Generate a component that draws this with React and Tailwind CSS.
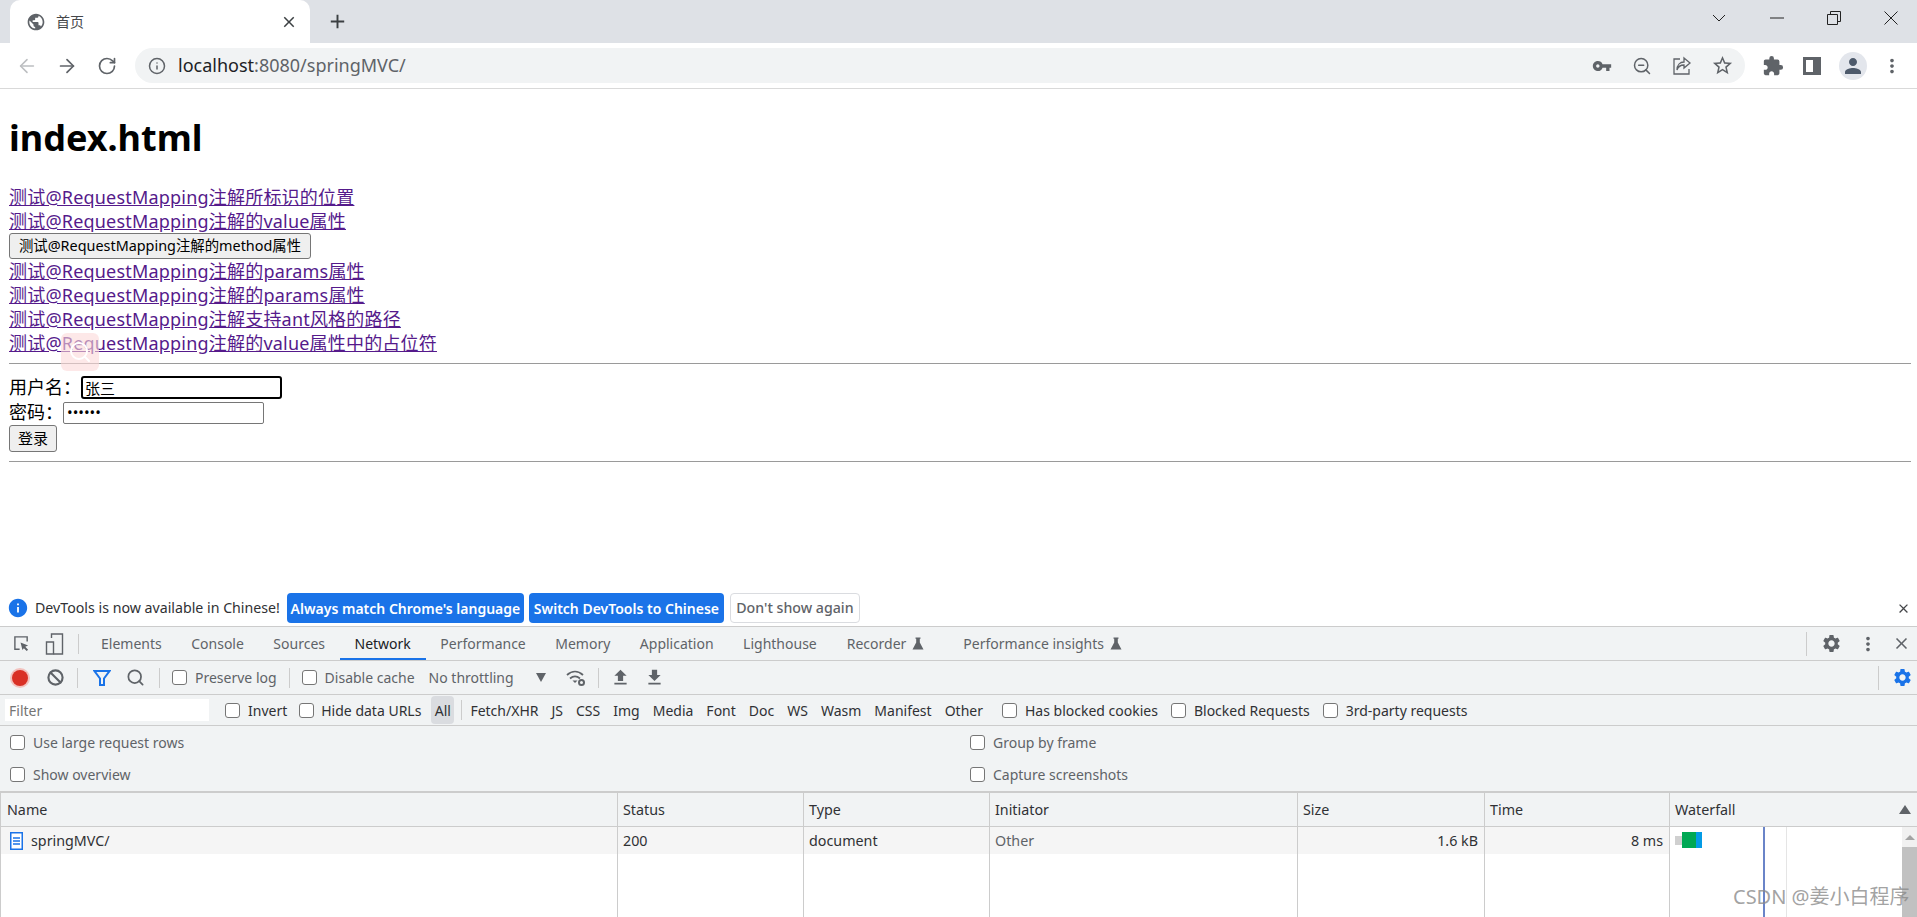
import React from 'react';
import {ArrowLeft, ArrowRight, RotateCw, Info, ZoomOut, Ban, Search} from 'lucide-react';
import {MdPublic, MdClose, MdAdd, MdVpnKey, MdStarBorder, MdExtension, MdPerson, MdMoreVert, MdSettings, MdFileUpload, MdFileDownload, MdInfo} from 'react-icons/md';

const links = [
    '测试@RequestMapping注解所标识的位置',
    '测试@RequestMapping注解的value属性',
    null,
    '测试@RequestMapping注解的params属性',
    '测试@RequestMapping注解的params属性',
    '测试@RequestMapping注解支持ant风格的路径',
    '测试@RequestMapping注解的value属性中的占位符',
];

const tabs = ['Elements', 'Console', 'Sources', 'Network', 'Performance', 'Memory', 'Application', 'Lighthouse'];
const types = ['Fetch/XHR', 'JS', 'CSS', 'Img', 'Media', 'Font', 'Doc', 'WS', 'Wasm', 'Manifest', 'Other'];

const Flask = ({className}) => (
    <svg viewBox="0 0 12 12" className={className} fill="currentColor">
        <path d="M3.500 0h5v1.200H7.800V5L11.500 12H.5L4.200 5V1.200h-.7z" />
    </svg>
);

const Box = ({className = ''}) => (
    <span className={`inline-block w-[15px] h-[15px] shrink-0 bg-white border border-[#767676] rounded-[3px] ${className}`} />
);

const Sep = ({className = ''}) => <span className={`w-px h-[20px] bg-[#ccc] shrink-0 ${className}`} />;

const App = () => {
    return (
        <div className="w-[1917px] h-[917px] overflow-hidden flex flex-col bg-white font-['Noto_Sans','Noto_Sans_CJK_SC',sans-serif] text-[#202124]">
            {/* tab strip */}
            <div className="h-[43px] bg-[#dee1e6] flex items-end shrink-0">
                <div className="ml-[10px] w-[300px] h-[43px] bg-white rounded-t-[10px] flex items-center pl-[16px] pr-[12px]">
                    <MdPublic className="w-[20px] h-[20px] text-[#5f6368]" />
                    <span className="ml-[10px] text-[14px] text-[#45474a] flex-1">首页</span>
                    <MdClose className="w-[18px] h-[18px] text-[#3c4043]" />
                </div>
                <div className="h-[43px] flex items-center ml-[16px]">
                    <MdAdd className="w-[23px] h-[23px] text-[#3c4043]" />
                </div>
                <div className="flex-1" />
                <div className="h-[36px] self-start flex items-center text-[#222]">
                    <svg viewBox="0 0 14 8" className="w-[14px] h-[8px]" fill="none" stroke="currentColor"><path d="M1 1l6 6 6-6" /></svg>
                    <svg viewBox="0 0 14 2" className="w-[14px] h-[2px] ml-[44px]" fill="none" stroke="currentColor"><path d="M0 1h14" /></svg>
                    <svg viewBox="0 0 14 14" className="w-[14px] h-[14px] ml-[43px]" fill="none" stroke="currentColor"><path d="M.5 3.500h10v10H.5zM3.500 3.500V.5h10v10h-3" /></svg>
                    <svg viewBox="0 0 14 14" className="w-[14px] h-[14px] ml-[43px] mr-[19px]" fill="none" stroke="currentColor"><path d="M.5.5l13 13M13.500.5l-13 13" /></svg>
                </div>
            </div>
            {/* toolbar */}
            <div className="h-[46px] shrink-0 bg-white border-b border-[#d9d9d9] flex items-center">
                <ArrowLeft className="ml-[16px] w-[22px] h-[22px] text-[#bcbec1]" strokeWidth={1.7} />
                <ArrowRight className="ml-[18px] w-[22px] h-[22px] text-[#5f6368]" strokeWidth={1.9} />
                <RotateCw className="ml-[19px] w-[20px] h-[20px] text-[#5f6368]" strokeWidth={2} />
                <div className="ml-[18px] w-[1610px] h-[35px] bg-[#f1f3f4] rounded-full flex items-center">
                    <Info className="ml-[13px] w-[18px] h-[18px] text-[#5f6368]" strokeWidth={2} />
                    <span className="ml-[12px] text-[18px] tracking-[0px] text-[#202124]">localhost<span className="text-[#5f6368]">:8080/springMVC/</span></span>
                    <div className="flex-1" />
                    <MdVpnKey className="w-[20px] h-[20px] text-[#5f6368]" />
                    <ZoomOut className="ml-[20px] w-[20px] h-[20px] text-[#5f6368]" strokeWidth={1.8} />
                    <svg viewBox="0 0 20 20" className="ml-[20px] w-[20px] h-[20px] text-[#5f6368]" fill="none" stroke="currentColor" strokeWidth="1.300">
                        <path d="M8 3H2v15h15v-5M12 2l6 5-6 5V9c-4 0-6 2-7 5 0-5 3-8 7-8z" />
                    </svg>
                    <MdStarBorder className="ml-[19px] w-[23px] h-[23px] text-[#5f6368]" />
                    <div className="w-[11px]" />
                </div>
                <MdExtension className="ml-[17px] w-[22px] h-[22px] text-[#5f6368]" />
                <svg viewBox="0 0 18 18" className="ml-[19px] w-[18px] h-[18px] text-[#5f6368]" fill="currentColor"><path d="M0 0h18v18H0zM3 3v12h7V3z" fillRule="evenodd" /></svg>
                <div className="ml-[18px] w-[28px] h-[28px] rounded-full bg-[#e3e6ec] flex items-center justify-center">
                    <MdPerson className="w-[24px] h-[24px] text-[#4d5a6b]" />
                </div>
                <MdMoreVert className="ml-[14px] w-[22px] h-[22px] text-[#5f6368]" />
            </div>
            {/* page */}
            <div className="h-[503px] shrink-0 pl-[9px] pr-[6px] relative text-[18px] text-black">
                <h1 className="m-0 text-[36px] font-bold leading-[50px] mt-[24px] mb-[22px]">index.html</h1>
                <div className="flex flex-col items-start">
                    {links.map((text, index) =>
                        text ? (
                            <a key={index} href="#" className="h-[24px] leading-[24px] tracking-[0.2px] text-[#551a8b] underline">{text}</a>
                        ) : (
                            <button key={index} className="h-[26px] w-[302px] bg-[#efefef] border border-[#767676] rounded-[3px] text-[14.4px] leading-none text-black whitespace-nowrap">测试@RequestMapping注解的method属性</button>
                        )
                    )}
                </div>
                <hr className="mt-[8px] border-0 h-px bg-[#9a9a9a]" />
                <div className="flex items-center h-[25px] mt-[11px]">
                    <span>用户名：</span>
                    <input readOnly value="张三" className="absolute left-[81px] w-[201px] h-[23px] bg-white border-2 border-black rounded-[3px] px-[2px] text-[15px] outline-none" />
                </div>
                <div className="flex items-center h-[25px]">
                    <span>密码：</span>
                    <input readOnly type="password" value="123456" className="absolute left-[63px] w-[201px] h-[22px] bg-white border border-[#767676] rounded-[2px] px-[3px] text-[15px] outline-none" />
                </div>
                <button className="block h-[27px] w-[48px] bg-[#efefef] border border-[#767676] rounded-[3px] text-[15px] leading-none">登录</button>
                <hr className="mt-[9px] border-0 h-px bg-[#9a9a9a]" />
                {/* floating translucent search badge */}
                <div className="absolute left-[61px] top-[244px] w-[38px] h-[38px] rounded-[6px] bg-[#fbd9d9]/60 flex items-center justify-center">
                    <Search className="w-[24px] h-[24px] text-white" />
                </div>
            </div>
            {/* devtools infobar */}
            <div className="h-[35px] shrink-0 bg-white border-b border-[#ccc] flex items-center pb-[2px] text-[14.2px] text-[#303134]">
                <MdInfo className="ml-[7px] w-[22px] h-[22px] text-[#1a73e8]" />
                <span className="ml-[6px]">DevTools is now available in Chinese!</span>
                <div className="ml-[7px] w-[237px] h-[30px] rounded-[4px] bg-[#1a73e8] text-white text-[14px] font-semibold flex items-center justify-center whitespace-nowrap">Always match Chrome's language</div>
                <div className="ml-[5px] w-[195px] h-[30px] rounded-[4px] bg-[#1a73e8] text-white text-[14px] font-semibold flex items-center justify-center whitespace-nowrap">Switch DevTools to Chinese</div>
                <div className="ml-[6px] w-[130px] h-[30px] rounded-[4px] border border-[#dadce0] bg-white text-[#5f6368] font-medium flex items-center justify-center whitespace-nowrap">Don't show again</div>
                <div className="flex-1" />
                <MdClose className="w-[15px] h-[15px] mr-[6px] text-[#45474a]" />
            </div>
            {/* devtools tabs */}
            <div className="h-[34px] shrink-0 bg-[#f1f3f4] border-b border-[#ccc] flex items-center text-[14px] text-[#5f6368]">
                <svg viewBox="0 0 18 18" className="ml-[13px] w-[17px] h-[17px]" fill="none" stroke="currentColor" strokeWidth="1.500">
                    <path d="M7 15H2V2h13v5" />
                    <path d="M8 8l8 3-3 1.500 3 3-1.500 1.500-3-3L10 16z" fill="currentColor" stroke="none" />
                </svg>
                <svg viewBox="0 0 18 22" className="ml-[15px] w-[19px] h-[22px]" fill="none" stroke="currentColor" strokeWidth="1.400">
                    <path d="M6 5V1h11v20H8" />
                    <path d="M1 9h7v12H1z" />
                </svg>
                <Sep className="ml-[14px]" />
                <div className="ml-[22px] flex items-center gap-[29.5px] h-full">
                    {tabs.map((tab) => (
                        <div key={tab} className={`relative h-full flex items-center ${tab === 'Network' ? 'text-[#202124]' : ''}`}>
                            {tab}
                            {tab === 'Network' && <span className="absolute -left-[15px] -right-[15px] bottom-0 h-[2px] bg-[#1a73e8]" />}
                        </div>
                    ))}
                </div>
                <span className="ml-[30px]">Recorder</span>
                <Flask className="ml-[6px] w-[12px] h-[13px]" />
                <span className="ml-[39px]">Performance insights</span>
                <Flask className="ml-[6px] w-[12px] h-[13px]" />
                <div className="flex-1" />
                <Sep className="h-[24px]" />
                <MdSettings className="ml-[14px] w-[21px] h-[21px]" />
                <MdMoreVert className="ml-[15px] w-[22px] h-[22px]" />
                <MdClose className="ml-[13px] w-[19px] h-[19px] mr-[6px]" />
            </div>
            {/* network toolbar */}
            <div className="h-[34px] shrink-0 bg-[#f1f3f4] border-b border-[#ccc] flex items-center text-[14px] text-[#5f6368]">
                <span className="ml-[12px] w-[16px] h-[16px] rounded-full bg-[#d93025] shadow-[0_0_0_2px_#f3c2be]" />
                <Ban className="ml-[19px] w-[17px] h-[17px] text-[#5f6368]" strokeWidth={3} />
                <Sep className="ml-[13px]" />
                <svg viewBox="0 0 18 18" className="ml-[15px] w-[18px] h-[18px] text-[#1a73e8]" fill="none" stroke="currentColor" strokeWidth="2"><path d="M1.500 2h15L11 9.500V16H7V9.500z" /></svg>
                <Search className="ml-[15px] w-[19px] h-[19px] text-[#5f6368]" strokeWidth={2.2} />
                <Sep className="ml-[14px]" />
                <Box className="ml-[12px]" />
                <span className="ml-[8px]">Preserve log</span>
                <Sep className="ml-[12px]" />
                <Box className="ml-[12px]" />
                <span className="ml-[8px]">Disable cache</span>
                <span className="ml-[14px]">No throttling</span>
                <span className="ml-[22px] w-0 h-0 border-x-[5px] border-x-transparent border-t-[9px] border-t-[#5f6368]" />
                <svg viewBox="0 0 20 18" className="ml-[20px] w-[20px] h-[18px]" fill="none" stroke="currentColor" strokeWidth="1.800">
                    <path d="M1 6c5-4.500 11-4.500 16 0M4 9.500c3-2.500 7-2.500 10 0" />
                    <path d="M9 14l-2.500-2.500h5z" fill="currentColor" stroke="none" />
                    <circle cx="15.500" cy="13.500" r="2.500" strokeWidth="2" />
                </svg>
                <Sep className="ml-[12px]" />
                <MdFileUpload className="ml-[11px] w-[21px] h-[21px]" />
                <MdFileDownload className="ml-[13px] w-[21px] h-[21px]" />
                <div className="flex-1" />
                <Sep className="h-[24px]" />
                <MdSettings className="ml-[13px] w-[21px] h-[21px] mr-[4px] text-[#1a73e8]" />
            </div>
            {/* filter row */}
            <div className="h-[31px] shrink-0 bg-[#f1f3f4] border-b border-[#ccc] flex items-center text-[14px] text-[#303134]">
                <div className="ml-[5px] w-[204px] h-[22px] bg-white flex items-center pl-[4px] text-[#757575]">Filter</div>
                <Box className="ml-[16px]" />
                <span className="ml-[8px]">Invert</span>
                <Box className="ml-[12px]" />
                <span className="ml-[7px]">Hide data URLs</span>
                <div className="ml-[10px] w-[23px] h-[28px] rounded-[4px] bg-[#dadce0] flex items-center justify-center">All</div>
                <Sep className="ml-[7px]" />
                <div className="ml-[8px] flex items-center gap-[13px]">
                    {types.map((type) => <span key={type}>{type}</span>)}
                </div>
                <Box className="ml-[19px]" />
                <span className="ml-[8px]">Has blocked cookies</span>
                <Box className="ml-[13px]" />
                <span className="ml-[8px]">Blocked Requests</span>
                <Box className="ml-[13px]" />
                <span className="ml-[8px]">3rd-party requests</span>
            </div>
            {/* settings pane */}
            <div className="h-[65px] shrink-0 bg-[#f1f3f4] grid grid-cols-[970px_1fr] grid-rows-2 text-[14px] text-[#5f6368]">
                <div className="flex items-center pl-[10px]"><Box /><span className="ml-[8px]">Use large request rows</span></div>
                <div className="flex items-center"><Box /><span className="ml-[8px]">Group by frame</span></div>
                <div className="flex items-center pl-[10px]"><Box /><span className="ml-[8px]">Show overview</span></div>
                <div className="flex items-center"><Box /><span className="ml-[8px]">Capture screenshots</span></div>
            </div>
            {/* request table */}
            <div className="flex-1 min-h-0 border-t-2 border-[#ccc] border-l border-l-[#ccc] flex flex-col text-[14.3px] text-[#303134] relative">
                <div className="h-[34px] shrink-0 bg-[#f1f3f4] border-b border-[#ccc] flex">
                    <div className="w-[617px] border-r border-[#ccc] pl-[6px] flex items-center">Name</div>
                    <div className="w-[186px] border-r border-[#ccc] pl-[5px] flex items-center">Status</div>
                    <div className="w-[186px] border-r border-[#ccc] pl-[5px] flex items-center">Type</div>
                    <div className="w-[308px] border-r border-[#ccc] pl-[5px] flex items-center">Initiator</div>
                    <div className="w-[187px] border-r border-[#ccc] pl-[5px] flex items-center">Size</div>
                    <div className="w-[185px] border-r border-[#ccc] pl-[5px] flex items-center">Time</div>
                    <div className="flex-1 pl-[5px] pr-[6px] flex items-center justify-between">
                        Waterfall
                        <span className="w-0 h-0 border-x-[6px] border-x-transparent border-b-[9px] border-b-[#5f6368]" />
                    </div>
                </div>
                <div className="flex-1 min-h-0 flex">
                    <div className="flex-1 flex">
                        <div className="w-[617px] shrink-0 border-r border-[#ccc] relative">
                            <div className="h-[27px] bg-[#f5f5f5] pl-[9px] flex items-center">
                                <svg viewBox="0 0 13 18" className="w-[13px] h-[18px]" fill="none"><path d="M.75.750h11.500v16.500H.75z" fill="#fff" stroke="#1a73e8" strokeWidth="1.500" /><path d="M3 6h7M3 9h7M3 12h7" stroke="#1a73e8" strokeWidth="1.300" /></svg>
                                <span className="ml-[8px]">springMVC/</span>
                            </div>
                        </div>
                        <div className="w-[186px] shrink-0 border-r border-[#ccc]"><div className="h-[27px] bg-[#f5f5f5] pl-[5px] flex items-center">200</div></div>
                        <div className="w-[186px] shrink-0 border-r border-[#ccc]"><div className="h-[27px] bg-[#f5f5f5] pl-[5px] flex items-center">document</div></div>
                        <div className="w-[308px] shrink-0 border-r border-[#ccc]"><div className="h-[27px] bg-[#f5f5f5] pl-[5px] flex items-center text-[#5f6368]">Other</div></div>
                        <div className="w-[187px] shrink-0 border-r border-[#ccc]"><div className="h-[27px] bg-[#f5f5f5] pr-[6px] flex items-center justify-end">1.6 kB</div></div>
                        <div className="w-[185px] shrink-0 border-r border-[#ccc]"><div className="h-[27px] bg-[#f5f5f5] pr-[6px] flex items-center justify-end">8 ms</div></div>
                    </div>
                    <div className="w-[247px] shrink-0 relative bg-white">
                        <div className="pl-[5px] pt-[5px] flex items-center h-[21px]">
                            <span className="w-[7px] h-[9px] bg-[#d0d0d0]" />
                            <span className="w-[14px] h-[16px] bg-[#00a854]" />
                            <span className="w-[6px] h-[16px] bg-[#039be5]" />
                        </div>
                        <span className="absolute left-[93px] top-0 bottom-0 w-[2px] bg-[#6a84c8]" />
                        <span className="absolute left-[116px] top-0 bottom-0 w-[1px] bg-[#e5e5e5]" />
                        {/* scrollbar */}
                        <div className="absolute right-0 top-0 bottom-0 w-[15px] bg-[#f1f1f1] flex flex-col items-center">
                            <span className="mt-[8px] w-0 h-0 border-x-[5px] border-x-transparent border-b-[5px] border-b-[#a3a3a3]" />
                            <span className="mt-[7px] w-full flex-1 bg-[#c1c1c1]" />
                        </div>
                    </div>
                </div>
                <div className="absolute left-[1732px] bottom-[8px] text-[20px] leading-[24px] text-[#8a8a8a]/80 whitespace-nowrap">CSDN @姜小白程序</div>
            </div>
        </div>
    );
};

export default App;
